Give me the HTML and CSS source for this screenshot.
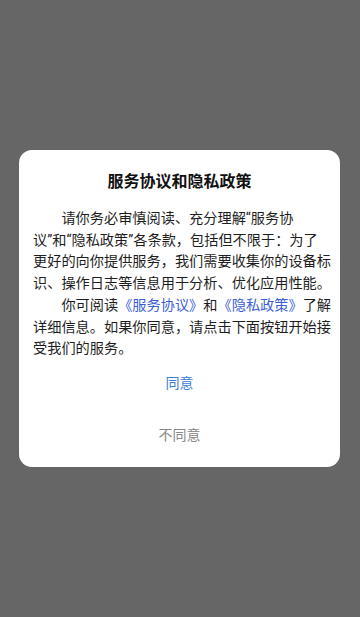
FILE: index.html
```html
<!DOCTYPE html>
<html lang="zh-CN">
<head>
<meta charset="utf-8">
<meta name="viewport" content="width=device-width, initial-scale=1">
<title>服务协议和隐私政策</title>
<link rel="stylesheet" href="styles.css">
</head>
<body>
<div class="overlay">
  <div class="dialog">
    <h1 class="title">服务协议和隐私政策</h1>
    <div class="content">
      <p class="para">请你务必审慎阅读、充分理解“服务协<br>议”和“隐私政策”各条款，包括但不限于：为了<br>更好的向你提供服务，我们需要收集你的设备标<br>识、操作日志等信息用于分析、优化应用性能。</p>
      <p class="para">你可阅读<a class="link" href="#">《服务协议》</a>和<a class="link" href="#">《隐私政策》</a>了解<br>详细信息。如果你同意，请点击下面按钮开始接<br>受我们的服务。</p>
    </div>
    <div class="actions">
      <button class="btn btn-agree">同意</button>
      <button class="btn btn-disagree">不同意</button>
    </div>
  </div>
</div>
</body>
</html>
```

FILE: styles.css
```css
* { box-sizing: border-box; }
html, body {
  margin: 0;
  padding: 0;
  height: 100%;
}
body {
  background: #666666;
  font-family: Roboto, "Noto Sans CJK SC", sans-serif;
}
.overlay {
  height: 617px;
  display: flex;
  flex-direction: column;
  align-items: center;
  padding-top: 150px;
}
.dialog {
  width: 321px;
  margin-left: -1px;
  background: #ffffff;
  border-radius: 13px;
  padding: 20px 14px 11px;
  display: flex;
  flex-direction: column;
}
.title {
  margin: 0;
  font-size: 16px;
  line-height: 24px;
  font-weight: 700;
  color: #111111;
  text-align: center;
}
.content {
  margin-top: 14px;
  font-size: 14.2px;
  line-height: 21.7px;
  color: #1e1e1e;
  white-space: nowrap;
}
.para {
  margin: 0;
  text-indent: 2em;
}
.link {
  color: #3b5fd8;
  text-decoration: none;
}
.actions {
  margin-top: 0;
  display: flex;
  flex-direction: column;
  align-items: stretch;
  gap: 8px;
}
.btn {
  border: none;
  background: transparent;
  font-family: Roboto, "Noto Sans CJK SC", sans-serif;
  font-size: 14px;
  height: 44px;
  padding: 0;
}
.btn-agree {
  color: #3b7ed8;
}
.btn-disagree {
  color: #888888;
}
```
